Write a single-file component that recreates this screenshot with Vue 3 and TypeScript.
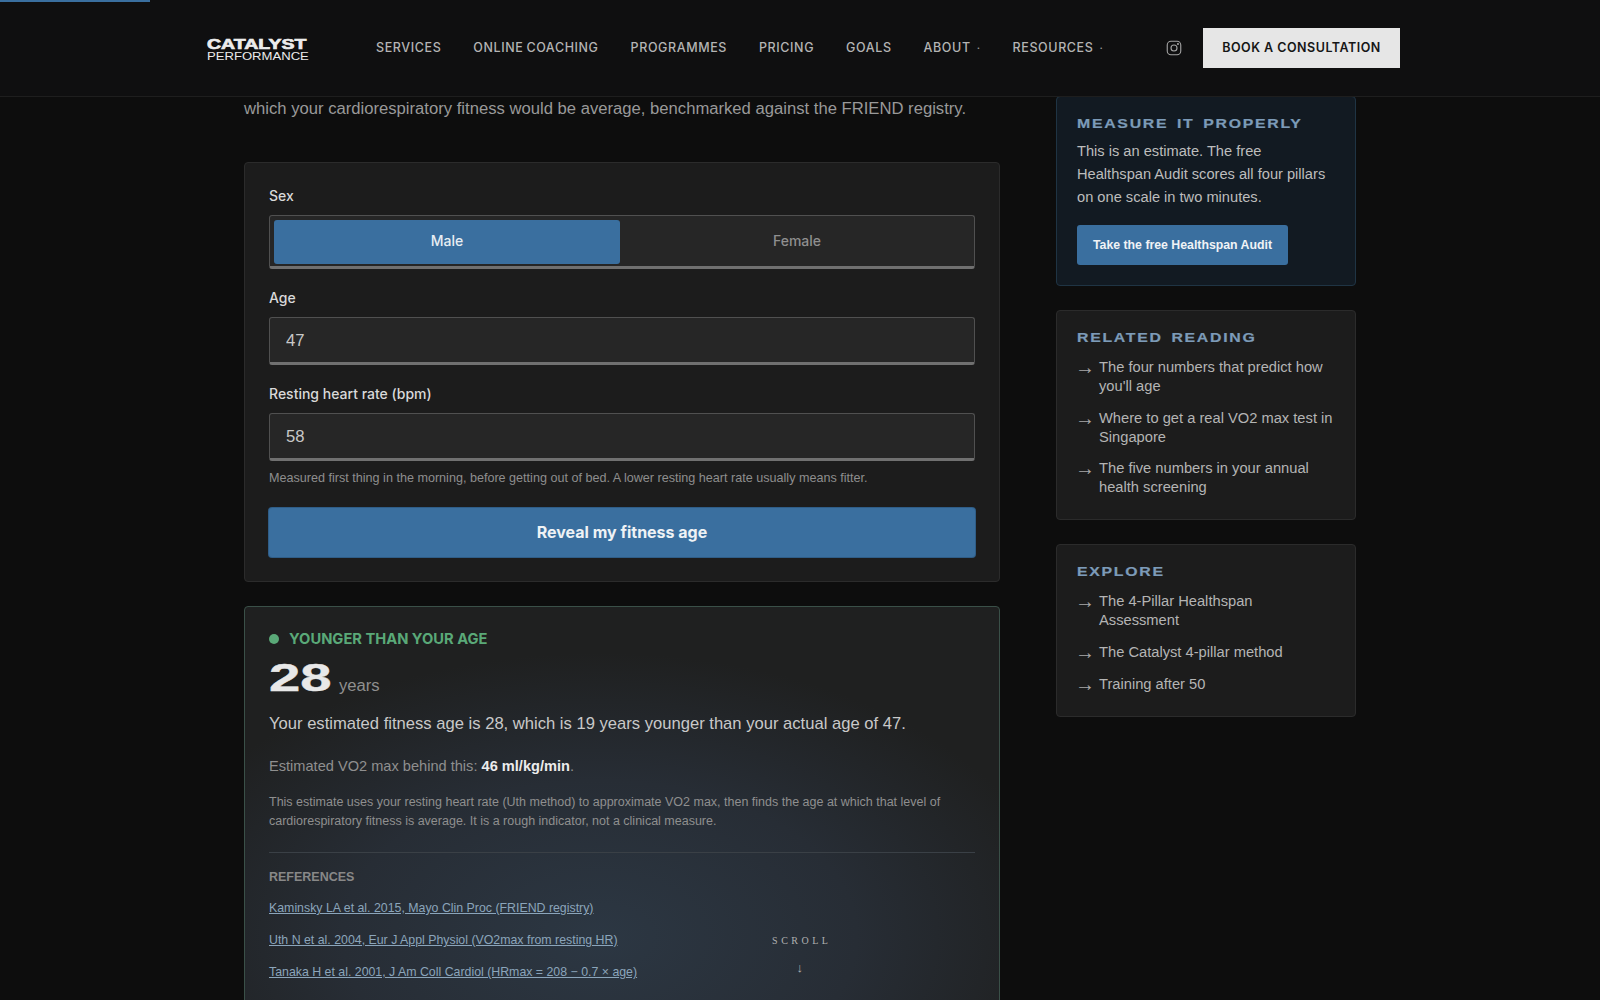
<script setup lang="ts">
const navItems: { label: string; caret?: boolean }[] = [
  { label: 'Services' },
  { label: 'Online Coaching' },
  { label: 'Programmes' },
  { label: 'Pricing' },
  { label: 'Goals' },
  { label: 'About', caret: true },
  { label: 'Resources', caret: true },
]
const related = [
  "The four numbers that predict how you'll age",
  'Where to get a real VO2 max test in Singapore',
  'The five numbers in your annual health screening',
]
const explore = ['The 4-Pillar Healthspan Assessment', 'The Catalyst 4-pillar method', 'Training after 50']
const refs = [
  'Kaminsky LA et al. 2015, Mayo Clin Proc (FRIEND registry)',
  'Uth N et al. 2004, Eur J Appl Physiol (VO2max from resting HR)',
  'Tanaka H et al. 2001, J Am Coll Cardiol (HRmax = 208 − 0.7 × age)',
]
</script>

<template>
  <div class="page">
    <div class="progress"></div>
    <header class="header">
      <div class="header-inner">
        <a class="logo">
          <span class="logo-top">CATALYST</span>
          <span class="logo-bottom">PERFORMANCE</span>
        </a>
        <nav class="nav">
          <a v-for="item in navItems" :key="item.label" class="nav-link">
            {{ item.label }}<span v-if="item.caret" class="caret">·</span>
          </a>
        </nav>
        <svg class="insta" viewBox="0 0 24 24" fill="none" stroke="currentColor" stroke-width="1.5">
          <rect x="3" y="3" width="18" height="18" rx="5" />
          <circle cx="12" cy="12" r="4" />
          <circle cx="17.3" cy="6.7" r="0.6" fill="currentColor" />
        </svg>
        <a class="book">BOOK A CONSULTATION</a>
      </div>
    </header>

    <div class="layout">
      <main class="main">
        <p class="intro">which your cardiorespiratory fitness would be average, benchmarked against the FRIEND registry.</p>

        <form class="card form" @submit.prevent>
          <div class="field">
            <label class="label">Sex</label>
            <div class="toggle">
              <button type="button" class="toggle-btn active">Male</button>
              <button type="button" class="toggle-btn">Female</button>
            </div>
          </div>
          <div class="field">
            <label class="label">Age</label>
            <input class="input" value="47" />
          </div>
          <div class="field last">
            <label class="label">Resting heart rate (bpm)</label>
            <input class="input" value="58" />
            <p class="hint">Measured first thing in the morning, before getting out of bed. A lower resting heart rate usually means fitter.</p>
          </div>
          <button type="button" class="reveal">Reveal my fitness age</button>
        </form>

        <section class="result">
          <div class="badge"><span class="dot"></span>YOUNGER THAN YOUR AGE</div>
          <div class="age"><span class="age-num">28</span><span class="age-unit">years</span></div>
          <p class="sentence">Your estimated fitness age is 28, which is 19 years younger than your actual age of 47.</p>
          <p class="vo2">Estimated VO2 max behind this: <strong>46 ml/kg/min</strong>.</p>
          <p class="note">This estimate uses your resting heart rate (Uth method) to approximate VO2 max, then finds the age at which that level of cardiorespiratory fitness is average. It is a rough indicator, not a clinical measure.</p>
          <div class="refs">
            <h4 class="refs-title">REFERENCES</h4>
            <a v-for="r in refs" :key="r" class="ref">{{ r }}</a>
          </div>
        </section>
      </main>

      <aside class="side">
        <div class="panel panel-cta">
          <h3 class="panel-title">MEASURE IT PROPERLY</h3>
          <p class="panel-text">This is an estimate. The free Healthspan Audit scores all four pillars on one scale in two minutes.</p>
          <a class="audit">Take the free Healthspan Audit</a>
        </div>
        <div class="panel">
          <h3 class="panel-title">RELATED READING</h3>
          <ul class="links">
            <li v-for="l in related" :key="l"><span class="arrow">→</span><a>{{ l }}</a></li>
          </ul>
        </div>
        <div class="panel panel-explore">
          <h3 class="panel-title">EXPLORE</h3>
          <ul class="links">
            <li v-for="l in explore" :key="l"><span class="arrow">→</span><a>{{ l }}</a></li>
          </ul>
        </div>
      </aside>
    </div>

    <div class="scroll">
      <span class="scroll-text">SCROLL</span>
      <span class="scroll-arrow">↓</span>
    </div>
  </div>
</template>

<style>
html, body { margin: 0; background: #0d0d0d; }
</style>

<style scoped>
* { box-sizing: border-box; }
.page {
  position: relative;
  height: 1000px;
  overflow: hidden;
  background: #0d0d0d;
  color: #e8e8e8;
  font-family: "Liberation Sans", Arial, sans-serif;
}
.progress {
  position: absolute;
  left: 0;
  top: 0;
  width: 150px;
  height: 2px;
  background: #3a6f9f;
  z-index: 3;
}
.header {
  position: relative;
  z-index: 2;
  height: 97px;
  background: #0f0f10;
  border-bottom: 1px solid #1e1e1e;
}
.header-inner {
  width: 1200px;
  margin: 0 auto;
  height: 96px;
  display: flex;
  align-items: center;
}
.logo {
  display: flex;
  flex-direction: column;
  width: 176px;
  padding-left: 7px;
  color: #ececec;
  line-height: 1;
}
.logo-top {
  font-size: 15px;
  font-weight: 700;
  height: 13px;
  line-height: 14px;
  transform: scaleX(1.3);
  transform-origin: left;
  -webkit-text-stroke: 0.7px #ececec;
}
.logo-bottom {
  font-size: 11px;
  height: 10px;
  line-height: 12px;
  transform: scaleX(1.19);
  transform-origin: left;
}
.nav {
  display: flex;
  gap: 32px;
  flex: 1;
  margin-bottom: 2px;
}
.nav-link {
  font-family: Inter, "Liberation Sans", sans-serif;
  font-size: 12.5px;
  font-weight: 500;
  letter-spacing: 0.6px;
  word-spacing: -1px;
  text-transform: uppercase;
  color: #b4b4b4;
  white-space: nowrap;
}
.caret {
  margin-left: 6px;
  font-size: 11px;
  color: #9a9a9a;
}
.insta {
  width: 18px;
  height: 18px;
  color: #a2a2a2;
  margin-right: 20px;
}
.book {
  width: 197px;
  height: 40px;
  display: flex;
  align-items: center;
  justify-content: center;
  padding-bottom: 1px;
  background: #e6e6e6;
  color: #161616;
  font-family: Inter, "Liberation Sans", sans-serif;
  font-size: 12.5px;
  font-weight: 600;
  letter-spacing: 0.5px;
  white-space: nowrap;
}
.layout {
  width: 1112px;
  margin: -1px auto 0;
  display: grid;
  grid-template-columns: 756px 300px;
  gap: 56px;
}
.intro {
  margin: 0 0 42px;
  padding-top: 1px;
  height: 24px;
  font-size: 16.65px;
  line-height: 24px;
  color: #999;
  white-space: nowrap;
}
.card {
  background: #1c1c1c;
  border: 1px solid #2b2b2b;
  border-radius: 4px;
}
.form {
  padding: 24px;
}
.field {
  margin-bottom: 20px;
}
.field.last {
  margin-bottom: 21px;
}
.label {
  display: block;
  height: 20px;
  line-height: 18px;
  margin-bottom: 8px;
  font-family: Inter, "Liberation Sans", sans-serif;
  font-size: 14px;
  font-weight: 500;
  color: #d9d9d9;
}
.toggle {
  display: grid;
  grid-template-columns: 1fr 1fr;
  gap: 4px;
  height: 54px;
  padding: 4px 4px 2px;
  background: #262626;
  border: 1px solid #505050;
  border-bottom: 3px solid #707070;
  border-radius: 3px;
}
.toggle-btn {
  border: 0;
  border-radius: 3px;
  background: transparent;
  color: #8f8f8f;
  font: 500 14px Inter, "Liberation Sans", sans-serif;
  padding: 0 0 4px;
}
.toggle-btn.active {
  background: #3a6f9f;
  color: #e8eef3;
}
.input {
  display: block;
  width: 100%;
  height: 48px;
  padding: 2px 16px 0;
  background: #262626;
  border: 1px solid #505050;
  border-bottom: 3px solid #707070;
  border-radius: 3px;
  color: #c8c8c8;
  font: 400 16.65px "Liberation Sans", sans-serif;
  outline: none;
}
.hint {
  margin: 8px 0 0;
  font-size: 12.6px;
  line-height: 18px;
  color: #8e8e8e;
}
.reveal {
  display: block;
  width: 100%;
  height: 49px;
  border: 0;
  border-radius: 3px;
  padding-bottom: 2px;
  background: #3a6f9f;
  box-shadow: 0 0 0 1px #2f5d87;
  color: #eef2f5;
  font: 700 16px Inter, "Liberation Sans", sans-serif;
}
.result {
  margin-top: 24px;
  padding: 22px 24px 24px;
  min-height: 460px;
  border: 1px solid #3a5048;
  border-radius: 4px;
  background: radial-gradient(ellipse 62% 62% at 47% 72%, #2c3743 0%, #272d35 55%, #1f2020 100%);
}
.badge {
  display: flex;
  align-items: center;
  gap: 10px;
  height: 20px;
  font-family: Inter, "Liberation Sans", sans-serif;
  font-size: 14.7px;
  font-weight: 700;
  color: #5aa978;
}
.dot {
  width: 10px;
  height: 10px;
  border-radius: 50%;
  background: #5aa978;
}
.age {
  display: flex;
  align-items: baseline;
  height: 50px;
  margin-top: 4px;
}
.age-num {
  display: inline-block;
  width: 70px;
  font-size: 38px;
  line-height: 50px;
  font-weight: 700;
  color: #e8e8e8;
  transform: scaleX(1.48);
  transform-origin: left;
  -webkit-text-stroke: 0.4px #e8e8e8;
}
.age-unit {
  font-size: 16.65px;
  color: #8f8f8f;
}
.sentence {
  margin: 8px 0 0;
  font-size: 16.6px;
  line-height: 26px;
  color: #c9c9c9;
}
.vo2 {
  margin: 17px 0 0;
  font-size: 14.6px;
  line-height: 24px;
  color: #8f8f8f;
}
.vo2 strong {
  color: #ececec;
  font-weight: 700;
}
.note {
  margin: 15px 0 0;
  font-size: 12.5px;
  line-height: 19px;
  color: #8f8f8f;
}
.refs {
  margin-top: 21px;
  padding-top: 14px;
  border-top: 1px solid #3a4046;
  display: flex;
  flex-direction: column;
}
.refs-title {
  margin: 0 0 11px;
  font-size: 12.5px;
  line-height: 20px;
  font-weight: 700;
  color: #888;
}
.ref {
  font-size: 12.35px;
  line-height: 20px;
  margin-bottom: 12px;
  color: #8ba5bb;
  text-decoration: underline;
}
.side {
  display: flex;
  flex-direction: column;
  gap: 24px;
}
.panel {
  padding: 20px 20px 22px;
  background: #1c1c1c;
  border: 1px solid #2b2b2b;
  border-radius: 4px;
}
.panel-cta {
  padding-bottom: 20px;
  background: #121a22;
  border-color: #1f3444;
}
.panel-explore .links {
  gap: 13px;
}
.panel-title {
  margin: 0;
  height: 14px;
  line-height: 14px;
  font-size: 12px;
  font-weight: 700;
  letter-spacing: 1.3px;
  word-spacing: 2px;
  color: #7c9bb8;
  white-space: nowrap;
  transform: scaleX(1.32);
  transform-origin: left;
  -webkit-text-stroke: 0.2px #7c9bb8;
}
.panel-text {
  margin: 9px 0 16px;
  font-size: 14.65px;
  line-height: 23px;
  color: #bdbdbd;
}
.audit {
  display: flex;
  align-items: center;
  justify-content: center;
  width: 211px;
  height: 40px;
  background: #3a6f9f;
  border-radius: 3px;
  color: #f0f3f6;
  font-size: 12.3px;
  font-weight: 700;
  white-space: nowrap;
}
.links {
  list-style: none;
  margin: 13px 0 0;
  padding: 0;
  display: flex;
  flex-direction: column;
  gap: 12.5px;
}
.links li {
  display: flex;
  gap: 8px;
  font-size: 14.7px;
  line-height: 19px;
  color: #b4b4b4;
}
.arrow {
  flex: none;
  width: 15px;
  margin-left: -2px;
  margin-right: 1px;
  color: #a8a8a8;
  font-size: 20px;
  line-height: 18px;
}
.scroll {
  position: absolute;
  left: 800px;
  top: 935px;
  transform: translateX(-50%);
  display: flex;
  flex-direction: column;
  align-items: center;
  gap: 14px;
  color: #b0b0b0;
  font-family: "Liberation Serif", serif;
}
.scroll-text {
  font-size: 10px;
  line-height: 12px;
  letter-spacing: 3.5px;
  margin-right: -3.5px;
}
.scroll-arrow {
  font-family: "Liberation Mono", monospace;
  font-size: 13px;
  line-height: 16px;
  font-weight: 700;
}
</style>
